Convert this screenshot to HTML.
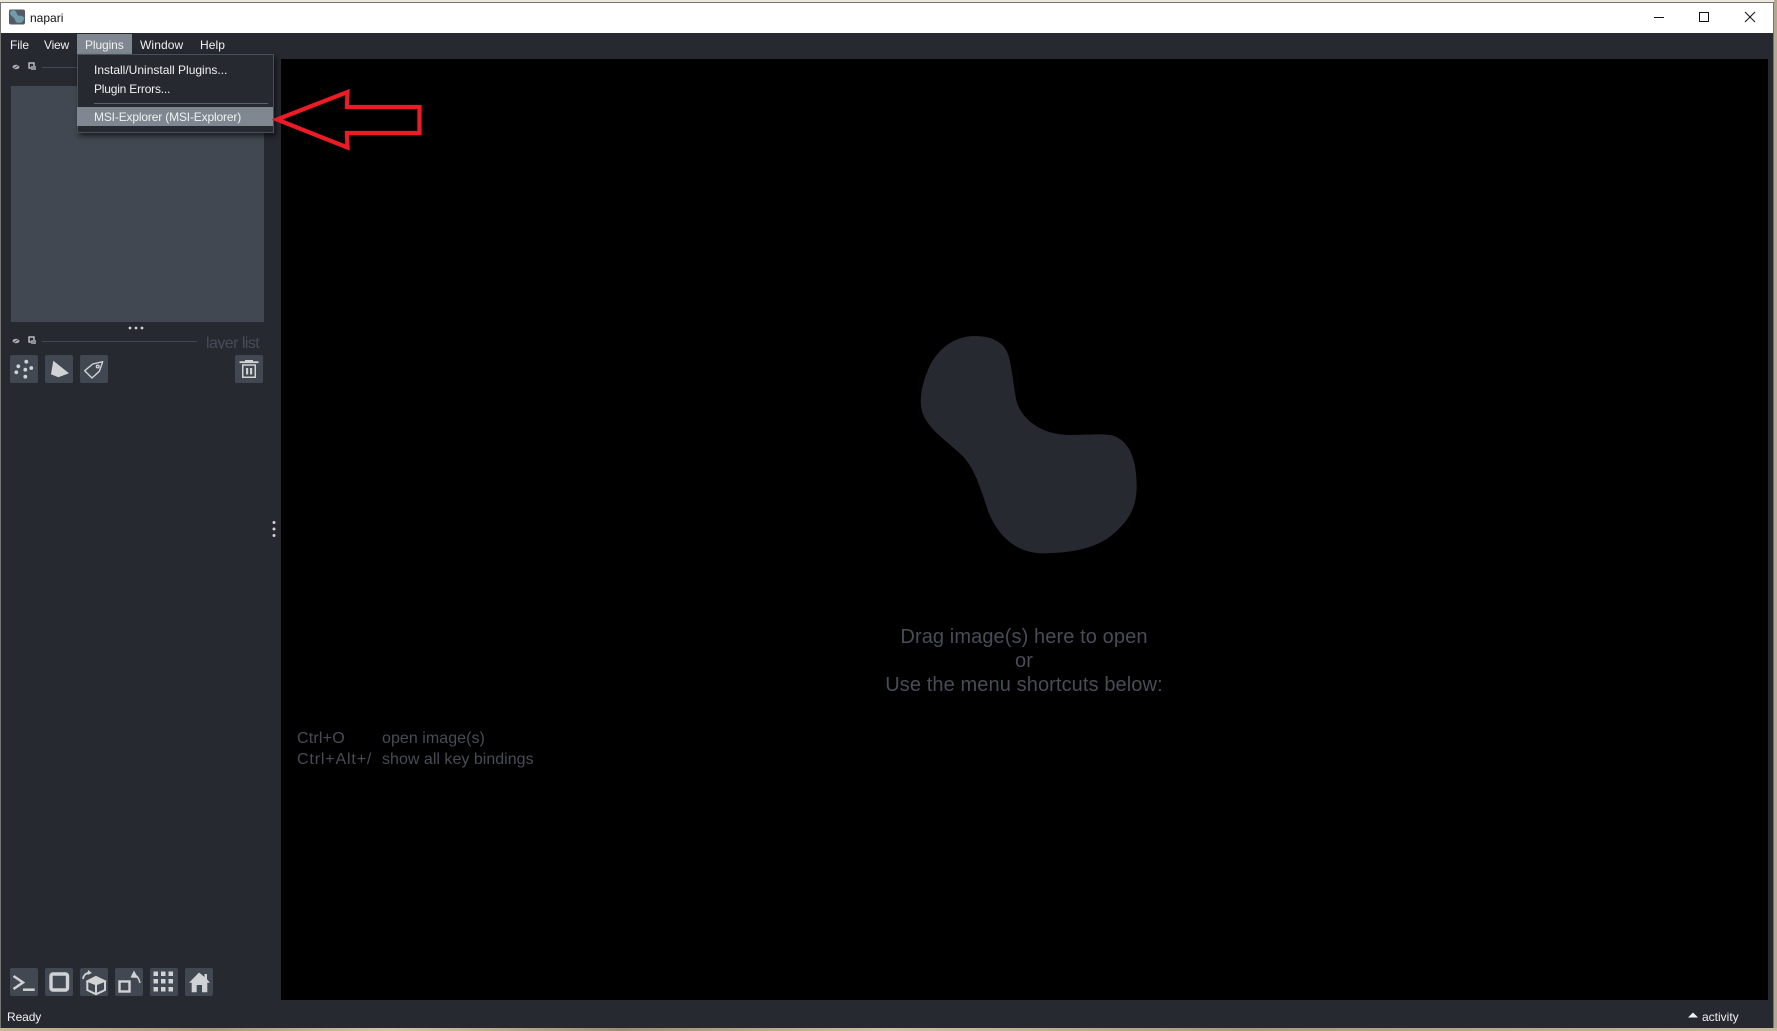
<!DOCTYPE html>
<html><head><meta charset="utf-8"><title>napari</title>
<style>
html,body{margin:0;padding:0}
body{width:1777px;height:1031px;position:relative;overflow:hidden;background:#b5a88f;font-family:"Liberation Sans",sans-serif}
div,span,svg{position:absolute}
.t{white-space:nowrap;font-size:12px;line-height:16px;color:#f0f1f2;letter-spacing:0}
.b{width:28px;height:28px;background:#414851;border-radius:2px}
.b svg{left:0;top:0}
.g{color:#464d57}
.k{font-size:16px;line-height:21px;color:#464d57}
</style></head><body>
<div style="left:0;top:0;width:1777px;height:2px;background:#ebe8df"></div>
<div style="left:1774px;top:0;width:3px;height:1031px;background:#b3a88f"></div>
<div style="left:0;top:1028px;width:1777px;height:3px;background:linear-gradient(90deg,#c9b894,#a8987a 12%,#d3c6a6 22%,#9c8e72 35%,#cfc1a0 50%,#a99a7c 70%,#c7b999 100%)"></div>
<div id="win" style="left:0;top:2px;width:1774px;height:1026px;background:#262930"></div>
<div style="left:0;top:2px;width:1774px;height:1px;background:#77756c"></div>
<div style="left:0;top:2px;width:1px;height:1026px;background:#77756c"></div>
<div style="left:1773px;top:2px;width:1px;height:1026px;background:#77756c"></div>
<!-- title bar -->
<div style="left:1px;top:3px;width:1772px;height:30px;background:#fff"></div>
<svg style="left:9px;top:9px" width="16" height="16" viewBox="0 0 17 16"><rect width="17" height="16" rx="2" fill="#545a68"/><path d="M3 1C7 0 8 3 9 6C11 7 15 6 16 9C16 13 12 15 9 14C6 14 7 9 4 8C1 6 0 3 3 1Z" fill="#6f9ea8"/></svg>
<div class="t" style="left:30px;top:10px;color:#111">napari</div>
<svg style="left:1620px;top:0" width="154" height="33" viewBox="0 0 154 33" fill="none" stroke="#111" stroke-width="1"><path d="M34 17.5H44"/><rect x="79.5" y="12.5" width="9" height="9"/><path d="M125 12L135 22M135 12L125 22"/></svg>
<!-- menubar -->
<div style="left:77px;top:34px;width:55px;height:20px;background:#7f8790"></div>
<div class="t" style="left:10px;top:37px;letter-spacing:-.1px">File</div>
<div class="t" style="left:44px;top:37px;letter-spacing:-.2px">View</div>
<div class="t" style="left:85px;top:37px;letter-spacing:-.1px">Plugins</div>
<div class="t" style="left:140px;top:37px;letter-spacing:.1px">Window</div>
<div class="t" style="left:200px;top:37px;letter-spacing:.1px">Help</div>
<!-- canvas -->
<div style="left:281px;top:59px;width:1487px;height:941px;background:#000"></div>
<svg style="left:900px;top:320px" width="260" height="250" viewBox="0 0 780 750"><path fill="#262930" d="M225 48C280 48 318 70 328 115C338 160 342 210 350 245C365 295 420 345 510 345C560 345 610 340 640 347C690 365 710 420 710 500C710 570 680 610 630 650C570 695 480 700 420 700C340 695 290 640 265 575C240 500 225 450 190 410C150 370 100 340 75 295C55 260 60 210 80 160C105 90 160 48 225 48Z"/></svg>
<div class="g" style="left:800px;top:624.500px;width:448px;text-align:center;font-size:20px;line-height:24px;white-space:nowrap;letter-spacing:.1px">Drag image(s) here to open<br>or<br>Use the menu shortcuts below:</div>
<div class="t k" style="left:297px;top:727.500px;letter-spacing:.2px">Ctrl+O</div>
<div class="t k" style="left:382px;top:727.500px;letter-spacing:.05px">open image(s)</div>
<div class="t k" style="left:297px;top:748.500px;letter-spacing:.85px">Ctrl+Alt+/</div>
<div class="t k" style="left:382px;top:748.500px;letter-spacing:.02px">show all key bindings</div>
<!-- left dock -->
<svg style="left:11px;top:62px" width="30" height="10" viewBox="0 0 30 10"><ellipse cx="5" cy="5" rx="3.500" ry="2.300" fill="#a8aaad"/><path d="M2 7L8 3" stroke="#262930" stroke-width=".7"/><rect x="18" y="1" width="5" height="5" fill="none" stroke="#d1d2d4" stroke-width="1.300"/><rect x="20" y="4" width="5" height="4" fill="#8d9096"/></svg>
<div style="left:42px;top:67px;width:36px;height:1px;background:#414851"></div>
<div style="left:11px;top:86px;width:253px;height:236px;background:#414851"></div>
<svg style="left:125px;top:324px" width="20" height="8"><circle cx="5" cy="4" r="1.400" fill="#d1d2d4"/><circle cx="11" cy="4" r="1.400" fill="#d1d2d4"/><circle cx="17" cy="4" r="1.400" fill="#d1d2d4"/></svg>
<svg style="left:11px;top:336px" width="30" height="10" viewBox="0 0 30 10"><ellipse cx="5" cy="5" rx="3.500" ry="2.300" fill="#a8aaad"/><path d="M2 7L8 3" stroke="#262930" stroke-width=".7"/><rect x="18" y="1" width="5" height="5" fill="none" stroke="#d1d2d4" stroke-width="1.300"/><rect x="20" y="4" width="5" height="4" fill="#8d9096"/></svg>
<div style="left:42px;top:341px;width:155px;height:1px;background:#414851"></div>
<div style="left:200px;top:334px;width:64px;height:15px;overflow:hidden"><div class="t" style="left:6px;top:0;font-size:16px;line-height:20px;letter-spacing:-.55px;color:#464d57">layer list</div></div>
<div class="b" style="left:10px;top:355px"><svg width="28" height="28" fill="#d1d2d4"><circle cx="16.300" cy="6.700" r="1.900"/><circle cx="8.300" cy="11.300" r="1.900"/><circle cx="21.300" cy="13" r="1.900"/><circle cx="15.300" cy="14.700" r="1.900"/><circle cx="6.300" cy="17.300" r="1.900"/><circle cx="15.300" cy="21.700" r="1.900"/></svg></div>
<div class="b" style="left:45px;top:355px"><svg width="28" height="28"><path fill="#d1d2d4" d="M8.300 5.700L24 18.300L13.300 22.300L6 19.300Z"/></svg></div>
<div class="b" style="left:80px;top:355px"><svg width="28" height="28" fill="none" stroke="#d1d2d4" stroke-width="1.400"><path d="M22.700 6.700L12.700 9L4.700 15.700L12 23L19.300 16.300Z" stroke-linejoin="round"/><circle cx="17.700" cy="11.500" r="1.300"/></svg></div>
<div class="b" style="left:235px;top:355px"><svg width="28" height="28" fill="#d1d2d4"><path d="M10 5h8v1.300h5.500v1.800h-19V6.300H10Z"/><path fill-rule="evenodd" d="M7 9.300h14v13.700H7ZM8.500 10.800V21.500H19.500V10.800Z"/><rect x="11" y="13" width="2.200" height="6.500"/><rect x="15" y="13" width="2.200" height="6.500"/></svg></div>
<svg style="left:270px;top:518px" width="8" height="22" fill="#d1d2d4"><circle cx="4" cy="4.500" r="1.500"/><circle cx="4" cy="11" r="1.500"/><circle cx="4" cy="17.500" r="1.500"/></svg>
<!-- bottom buttons -->
<div class="b" style="left:10px;top:968px"><svg width="28" height="28" fill="none" stroke="#d1d2d4" stroke-width="2.500"><path d="M3.500 8L13 14.500L3.500 21"/><path d="M13 21.700H24.700"/></svg></div>
<div class="b" style="left:45px;top:968px"><svg width="28" height="28" fill="none" stroke="#d1d2d4" stroke-width="3.400"><rect x="6" y="6" width="16.500" height="16" rx="2"/></svg></div>
<div class="b" style="left:80px;top:968px"><svg width="28" height="28" fill="none" stroke="#d1d2d4" stroke-width="1.600"><path fill="#d1d2d4" d="M16 8.700L25 13L16 16.500L7.300 13Z"/><path d="M7.300 13V22L16 26.300L25 22V13M16 16.500V26.300" stroke-width="2"/><path d="M3 11C3.500 7.500 5.500 5.500 8.500 4.800" stroke-width="1.800"/><path fill="#d1d2d4" stroke="none" d="M8 2L12 5L7.500 7Z"/></svg></div>
<div class="b" style="left:115px;top:968px"><svg width="28" height="28" fill="none" stroke="#d1d2d4" stroke-width="2.400"><rect x="4.500" y="13.500" width="10" height="10"/><path d="M17 9C19 7 21 7 22.500 9C24 11 24.500 12.500 25 15" stroke-width="1.500"/><path fill="#d1d2d4" stroke="none" d="M19 2.500L23 10L15.500 9.500Z"/></svg></div>
<div class="b" style="left:150px;top:968px"><svg width="28" height="28" fill="#d1d2d4"><rect x="3.500" y="3.500" width="4.500" height="4.500"/><rect x="11" y="3.500" width="4.500" height="4.500"/><rect x="18.500" y="3.500" width="4.500" height="4.500"/><rect x="3.500" y="11" width="4.500" height="4.500"/><rect x="11" y="11" width="4.500" height="4.500"/><rect x="18.500" y="11" width="4.500" height="4.500"/><rect x="3.500" y="19" width="4.500" height="4.500"/><rect x="11" y="19" width="4.500" height="4.500"/><rect x="18.500" y="19" width="4.500" height="4.500"/></svg></div>
<div class="b" style="left:185px;top:968px"><svg width="28" height="28" fill="#d1d2d4"><path d="M14 4.500L19.500 9V6H22V11.200L25 14.700H22.300V24.300H17V17H11.700V24.300H6.700V14.700H4Z"/></svg></div>
<!-- status -->
<div class="t" style="left:7px;top:1009px;letter-spacing:-.1px">Ready</div>
<svg style="left:1688px;top:1012px" width="12" height="7"><path d="M5 .5L10 5.500H0Z" fill="#f0f1f2"/></svg>
<div class="t" style="left:1702px;top:1009px">activity</div>
<!-- popup -->
<div style="left:77px;top:54px;width:195px;height:77px;background:#262930;border:1px solid #4a505a;box-shadow:2px 3px 5px rgba(0,0,0,.6)"></div>
<div class="t" style="left:94px;top:62px;letter-spacing:0">Install/Uninstall Plugins...</div>
<div class="t" style="left:94px;top:81px;letter-spacing:-.2px">Plugin Errors...</div>
<div style="left:94px;top:103px;width:174px;height:1px;background:#5a626c"></div>
<div style="left:77px;top:107px;width:196px;height:19px;background:#7f8790"></div>
<div class="t" style="left:94px;top:109px;letter-spacing:-.16px">MSI-Explorer (MSI-Explorer)</div>
<!-- arrow -->
<svg style="left:270px;top:85px" width="156" height="70" viewBox="270 85 156 70"><path d="M277 119.500L347.500 92L347 107H419.500V133H347L347.500 147.500Z" fill="none" stroke="#ed1c24" stroke-width="4.200"/></svg>
</body></html>
